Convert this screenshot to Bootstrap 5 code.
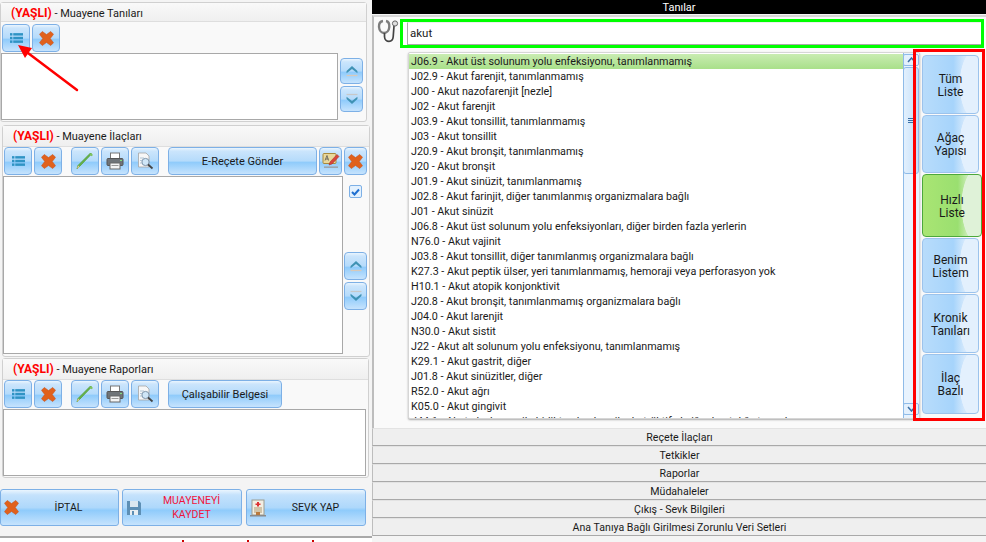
<!DOCTYPE html>
<html lang="tr">
<head>
<meta charset="utf-8">
<title>Muayene</title>
<link href="https://cdn.jsdelivr.net/npm/bootstrap@5.3.0/dist/css/bootstrap.min.css" rel="stylesheet">
<style>
html,body{height:542px;overflow:hidden}
body{background:#f4f4f4;font-family:Roboto,"Liberation Sans",Arial,sans-serif;font-size:11px;line-height:15px;color:#1a1a1a;width:986px;position:relative}
.left-col{width:372px;flex:none}
.right-col{width:614px;flex:none}
.pane{border:1px solid #d0d0d0;border-radius:3px;background:#f9f9f9;--bs-card-bg:#f9f9f9;--bs-card-border-color:#d0d0d0}
.pane-a{height:120px;margin:2px 5px 0 0}
.pane-b{height:232px;margin:3px 2px 0 2px}
.pane-c{height:120px;margin:1px 3px 0 2px}
.pane-head{height:21px;padding:3px 0 0 10px;background:linear-gradient(#f9f9f9,#efefef);border-bottom:1px solid #dedede;font-size:11px;white-space:nowrap}
.pane-a .pane-head{height:19px}
.tag{color:#f00;font-weight:700;font-size:12px}
.tb-row{height:29px;padding-left:1px}
.pane-a .tb-row{padding-top:2px;height:30px}
.tb{--bs-btn-padding-x:0;--bs-btn-padding-y:0;--bs-btn-font-size:11px;--bs-btn-line-height:14px;--bs-btn-border-radius:4px;--bs-btn-color:#1a1a1a;--bs-btn-hover-color:#1a1a1a;--bs-btn-bg:#cfe7fc;--bs-btn-border-color:#7db0e6;border:1px solid #7db0e6;height:28px;width:28px;display:flex;align-items:center;justify-content:center;background:linear-gradient(#eaf5fe 0,#cbe5fc 12%,#b5dbfb 50%,#8fcbfb 55%,#c6e3fd 100%);flex:none}
.g1{margin-left:9px}.g0{margin-left:2px}
.w-send,.w-cal{padding-top:2px}
.w-send{width:149px}.w-cal{width:114px}.w-s{width:23px}
.box{background:#fff;border:1px solid #a8a8a8}
.box-a{width:337px;height:67px;margin:1px 0 0 0}
.box-b{width:340px;height:178px}
.box-c{width:363px;height:67px}
.updn{width:23px;height:26px}
.pane-b .updn{height:28px}
.up-col{margin-left:1px;gap:2px;width:23px}
.pane-a .up-col{margin-left:2px;padding-top:6px}
.chk{width:13px;height:13px;margin:9px 0 52px;border:1px solid #7db0e6;border-radius:2px;background:#e3f1fe;display:flex;align-items:center;justify-content:center}
.foot{height:37px;margin-top:11px}
.foot .tb{height:37px;width:119px;justify-content:flex-start;padding-left:3px;border-radius:3px;background:linear-gradient(#eaf5fe 0,#c5e2fc 14%,#aed8fb 50%,#8fcbfb 58%,#c6e3fd 100%)}
.foot .tb span{flex:1;text-align:center;font-size:10.5px}
.foot .w2{width:120px;margin-left:3px}
.foot .w3{width:120px;margin-left:4px}
.redt{color:#f0143c}
.strip{height:6px;margin-top:10px;border-top:2px solid #a9a9a9;background:#fff;width:372px;padding-left:182px;gap:63px}
.tick{display:block;width:2px;height:2px;background:#c00;margin-top:2px}
.black{height:14px;background:#000;color:#fff;text-align:center;line-height:15px;font-size:11px}
.main{height:413px;margin-top:1px;border-top:2px solid #d8d8d8;border-left:2px solid #bdbdbd;background:#fafafa;margin-left:0}
.steth{width:26px;height:31px;flex:none;padding:2px 0 0 3px}
.gbox{width:584px;height:29px;border:3px solid #0f0;margin-top:2px;background:#fff;padding-left:4px}
.gbox input{width:100%;height:23px;border:0;border-left:1px solid #aaa;border-bottom:1px solid #aaa;border-top:1px solid #eee;outline:0;padding:0 0 1px 2px;font:inherit;font-size:11.5px;color:#1a1a1a;display:block;box-shadow:none;border-radius:0}
.list-wrap{width:512px;height:367px;margin:4px 0 0 34px;background:#fff;border:1px solid #d6d6d6;border-radius:2px;box-shadow:0 1px 2px #aaa;overflow:hidden;flex:none}
.dx-list{width:495px;overflow:hidden;--bs-list-group-bg:transparent;--bs-list-group-border-width:0;border-radius:0;margin-top:1px}
.dx-list .list-group-item{padding:0 0 0 2px;height:15px;line-height:15px;white-space:nowrap;color:#1a1a1a;font-size:10.75px}
.dx-list .sel{background:linear-gradient(#c9ecb2,#a9e08a)}
.sbar{width:16px;flex:none;background:#e8f3fe;border-left:1px solid #8fbbe8;position:relative}
.sb-btn{height:12px;border:1px solid #8fbbe8;border-radius:2px;background:#e3f0fd;margin:1px 0 0 -1px;display:flex;align-items:center;justify-content:center}
.sb-thumb{height:107px;border:1px solid #8fbbe8;border-radius:3px;background:linear-gradient(90deg,#e3f0fd,#c3dffa);margin:1px 0 0 -1px;display:flex;align-items:center;justify-content:center}
.sb-track{height:228px}
.grip{width:7px;height:5px;border-top:1px solid #3a6ea5;border-bottom:1px solid #3a6ea5;position:relative}
.grip i{position:absolute;left:0;right:0;top:1px;border-top:1px solid #3a6ea5}
.tabs{width:60px;margin-left:2px;padding-top:7px;flex:none}
.stab{--bs-btn-padding-x:0;--bs-btn-padding-y:0;--bs-btn-font-size:12px;--bs-btn-line-height:13px;--bs-btn-color:#1a1a1a;--bs-btn-hover-color:#1a1a1a;--bs-btn-border-radius:4px;width:57px;border:1px solid #9cc3ec;padding-top:2px;display:flex;align-items:center;justify-content:center;text-align:center;background:radial-gradient(ellipse 30px 60px at 100% 50%,#e3f0fd 60%,transparent 62%),linear-gradient(90deg,#b8dcfb,#a6d4fb 55%,#d3e8fc 75%);flex:none;margin-bottom:1px}
.stab.on{width:60px;border-color:#4ca83c;background:radial-gradient(ellipse 32px 66px at 100% 50%,#dff2d8 60%,transparent 62%),linear-gradient(90deg,#a9e573,#9adf70 60%,#c5ebb0 75%)}
.acc{--bs-list-group-bg:#efefef;--bs-list-group-border-width:0;border-radius:0;margin-top:0}
.acc .list-group-item{height:18px;padding:1px 0 0;text-align:center;line-height:15px;color:#1a1a1a;border-top:1px solid #e3e3e3;border-left:1px solid #bdbdbd;border-bottom:1px solid #a9a9a9;background:#efefef;font-size:10.6px}
.red-frame{position:absolute;left:913px;top:49px;width:72px;height:372px;border:3px solid #f00;pointer-events:none}
.red-arrow{position:absolute;left:0;top:0;pointer-events:none}
</style>
</head>
<body>
<svg width="0" height="0" class="position-absolute">
<defs>
<symbol id="i-list" viewBox="0 0 16 14"><g fill="#2f93c4"><rect x="0" y="1" width="3" height="3"/><rect x="4" y="1" width="12" height="3"/><rect x="0" y="5.500" width="3" height="3"/><rect x="4" y="5.500" width="12" height="3"/><rect x="0" y="10" width="3" height="3"/><rect x="4" y="10" width="12" height="3"/></g></symbol>
<symbol id="i-x" viewBox="0 0 16 16"><path d="M3.500 .5 8 3.800 12.500 .5 15.500 3.500 12 8 15.500 12.500 12.500 15.500 8 12.200 3.500 15.500 .5 12.500 4 8 .5 3.500Z" fill="#e0611c" stroke="#c9521a" stroke-width=".6" stroke-linejoin="round"/></symbol>
<symbol id="i-pen" viewBox="0 0 18 18"><path d="M1 17 2 13.500 14.500 1 15.500 2Z" fill="#69b64a" stroke="#4c9a33" stroke-width=".8"/><path d="M1 17 2 13.500 3.500 14.800Z" fill="#e8c79a"/><path d="M15 1 17 3 15.500 4.300 13.500 2.500Z" fill="#7fc35f"/></symbol>
<symbol id="i-print" viewBox="0 0 18 18"><rect x="4.500" y="1" width="9" height="6" fill="#fff" stroke="#777"/><rect x="1" y="6.500" width="16" height="7" rx="1" fill="#6f7478" stroke="#555"/><rect x="4" y="11" width="10" height="6" fill="#f4f4f4" stroke="#666"/><rect x="5.500" y="13" width="7" height="1" fill="#999"/><rect x="14" y="8" width="2" height="1" fill="#7ee07e"/></symbol>
<symbol id="i-find" viewBox="0 0 18 18"><path d="M2.500 1H10L13 4V15H2.500Z" fill="#f7f7f7" stroke="#a5a5a5" stroke-width=".8"/><circle cx="9.500" cy="10" r="3.600" fill="#cfe6f7" stroke="#7d93a8"/><path d="M12 12.500 16.500 16.500" stroke="#444" stroke-width="1.800"/><path d="M4 6h4M4 8.500h2.500M4 11h2.500" stroke="#9fb8cc" stroke-width=".8"/></symbol>
<symbol id="i-ab" viewBox="0 0 18 18"><rect x="1" y="1.500" width="13" height="10" rx="1" fill="#e9d89b" stroke="#a98a3c"/><rect x="2" y="14.500" width="14" height="1.300" fill="#9a9a9a"/><path d="M7 13 8 10 15 2.500 17 4.500 10 12Z" fill="#d8453c" stroke="#a42a24" stroke-width=".5"/><path d="M3 8.500 5 3.500 6.500 8.500M3.800 7h2.600" stroke="#555" stroke-width=".8" fill="none"/></symbol>
<symbol id="i-up" viewBox="0 0 18 20"><path d="M2 10 9 3.500 16 10V13L9 7.500 2 13Z" fill="#3f92b4"/><rect x="2" y="15" width="14" height="1.600" fill="#d9c9b8"/></symbol>
<symbol id="i-dn" viewBox="0 0 18 20"><rect x="2" y="3.400" width="14" height="1.600" fill="#c8c8c8"/><path d="M2 10 9 16.500 16 10V7L9 12.500 2 7Z" fill="#3f92b4"/></symbol>
</defs>
</svg>

<div class="d-flex">
<div class="left-col">
  <div class="card pane pane-a">
    <div class="pane-head"><span class="tag">(YAŞLI)</span> - Muayene Tanıları</div>
    <div class="tb-row d-flex">
      <button class="btn tb"><svg width="13" height="12"><use href="#i-list"/></svg></button>
      <button class="btn tb g0"><svg width="15" height="15"><use href="#i-x"/></svg></button>
    </div>
    <div class="d-flex">
      <div class="box box-a"></div>
      <div class="d-flex flex-column up-col">
        <button class="btn tb updn"><svg width="14" height="16"><use href="#i-up"/></svg></button>
        <button class="btn tb updn"><svg width="14" height="16"><use href="#i-dn"/></svg></button>
      </div>
    </div>
  </div>

  <div class="card pane pane-b">
    <div class="pane-head"><span class="tag">(YAŞLI)</span> - Muayene İlaçları</div>
    <div class="tb-row d-flex">
      <button class="btn tb"><svg width="13" height="12"><use href="#i-list"/></svg></button>
      <button class="btn tb g0"><svg width="15" height="15"><use href="#i-x"/></svg></button>
      <button class="btn tb g1"><svg width="18" height="18"><use href="#i-pen"/></svg></button>
      <button class="btn tb g0"><svg width="18" height="18"><use href="#i-print"/></svg></button>
      <button class="btn tb g0"><svg width="18" height="18"><use href="#i-find"/></svg></button>
      <button class="btn tb g1 w-send">E-Reçete Gönder</button>
      <button class="btn tb g0 w-s"><svg width="18" height="18"><use href="#i-ab"/></svg></button>
      <button class="btn tb g0 w-s"><svg width="15" height="15"><use href="#i-x"/></svg></button>
    </div>
    <div class="d-flex">
      <div class="box box-b"></div>
      <div class="d-flex flex-column up-col align-items-center">
        <div class="chk"><svg width="9" height="8" viewBox="0 0 9 8"><path d="M1 4 3.500 6.500 8 1.500" stroke="#1f6fd0" stroke-width="2" fill="none"/></svg></div>
        <button class="btn tb updn"><svg width="14" height="16"><use href="#i-up"/></svg></button>
        <button class="btn tb updn"><svg width="14" height="16"><use href="#i-dn"/></svg></button>
      </div>
    </div>
  </div>

  <div class="card pane pane-c">
    <div class="pane-head"><span class="tag">(YAŞLI)</span> - Muayene Raporları</div>
    <div class="tb-row d-flex">
      <button class="btn tb"><svg width="13" height="12"><use href="#i-list"/></svg></button>
      <button class="btn tb g0"><svg width="15" height="15"><use href="#i-x"/></svg></button>
      <button class="btn tb g1"><svg width="18" height="18"><use href="#i-pen"/></svg></button>
      <button class="btn tb g0"><svg width="18" height="18"><use href="#i-print"/></svg></button>
      <button class="btn tb g0"><svg width="18" height="18"><use href="#i-find"/></svg></button>
      <button class="btn tb g1 w-cal">Çalışabilir Belgesi</button>
    </div>
    <div class="box box-c"></div>
  </div>

  <div class="foot d-flex">
    <button class="btn tb"><svg width="15" height="15"><use href="#i-x"/></svg><span>İPTAL</span></button>
    <button class="btn tb w2"><svg width="16" height="16" viewBox="0 0 16 16"><path d="M1 1H13L15 3V15H1Z" fill="#5d8fb5"/><rect x="4" y="1" width="8" height="6" fill="#dbe7f0"/><rect x="4" y="10" width="8" height="5" fill="#e8eef3"/><rect x="6" y="11" width="2" height="4" fill="#5d8fb5"/></svg><span class="redt">MUAYENEYİ<br>KAYDET</span></button>
    <button class="btn tb w3"><svg width="16" height="18" viewBox="0 0 16 18"><rect x="2" y="1" width="12" height="15" fill="#f2eee2" stroke="#9c9c90"/><path d="M7 3h2v1.500h1.500v1.500H9v1.500H7V6H5.500V4.500H7Z" fill="#d33"/><path d="M4 9h8M4 11h8M4 13h8" stroke="#b09a70"/><rect x="6" y="13" width="4" height="3" fill="#b9793c"/><rect x="0" y="16" width="16" height="1.500" fill="#8a8a8a"/></svg><span>SEVK YAP</span></button>
  </div>
  <div class="strip d-flex"><i class="tick"></i><i class="tick"></i><i class="tick"></i></div>
</div>

<div class="right-col">
  <div class="black">Tanılar</div>
  <div class="main">
    <div class="d-flex">
      <div class="steth"><svg width="22" height="24" viewBox="0 0 22 24"><path d="M6 2C3 2.500 1.800 5 2 8c.3 3.500 2.500 6 5 6 2.800 0 5-2.500 5.300-6 .2-3-.8-5.500-3.300-6" fill="none" stroke="#7d7d7d" stroke-width="2.400"/><path d="M7.500 14v3.500c0 3 2.300 4.800 4.500 4.800 2.500 0 4-2 4.200-4.500L17 7" fill="none" stroke="#444" stroke-width="1.700"/><circle cx="18" cy="4.500" r="2.600" fill="#dedede" stroke="#666"/></svg></div>
      <div class="gbox"><input class="form-control" type="text" value="akut"></div>
    </div>
    <div class="d-flex">
      <div class="list-wrap d-flex">
        <ul class="list-group dx-list">
          <li class="list-group-item sel">J06.9 - Akut üst solunum yolu enfeksiyonu, tanımlanmamış</li>
          <li class="list-group-item">J02.9 - Akut farenjit, tanımlanmamış</li>
          <li class="list-group-item">J00 - Akut nazofarenjit [nezle]</li>
          <li class="list-group-item">J02 - Akut farenjit</li>
          <li class="list-group-item">J03.9 - Akut tonsillit, tanımlanmamış</li>
          <li class="list-group-item">J03 - Akut tonsillit</li>
          <li class="list-group-item">J20.9 - Akut bronşit, tanımlanmamış</li>
          <li class="list-group-item">J20 - Akut bronşit</li>
          <li class="list-group-item">J01.9 - Akut sinüzit, tanımlanmamış</li>
          <li class="list-group-item">J02.8 - Akut farinjit, diğer tanımlanmış organizmalara bağlı</li>
          <li class="list-group-item">J01 - Akut sinüzit</li>
          <li class="list-group-item">J06.8 - Akut üst solunum yolu enfeksiyonları, diğer birden fazla yerlerin</li>
          <li class="list-group-item">N76.0 - Akut vajinit</li>
          <li class="list-group-item">J03.8 - Akut tonsillit, diğer tanımlanmış organizmalara bağlı</li>
          <li class="list-group-item">K27.3 - Akut peptik ülser, yeri tanımlanmamış, hemoraji veya perforasyon yok</li>
          <li class="list-group-item">H10.1 - Akut atopik konjonktivit</li>
          <li class="list-group-item">J20.8 - Akut bronşit, tanımlanmamış organizmalara bağlı</li>
          <li class="list-group-item">J04.0 - Akut larenjit</li>
          <li class="list-group-item">N30.0 - Akut sistit</li>
          <li class="list-group-item">J22 - Akut alt solunum yolu enfeksiyonu, tanımlanmamış</li>
          <li class="list-group-item">K29.1 - Akut gastrit, diğer</li>
          <li class="list-group-item">J01.8 - Akut sinüzitler, diğer</li>
          <li class="list-group-item">R52.0 - Akut ağrı</li>
          <li class="list-group-item">K05.0 - Akut gingivit</li>
          <li class="list-group-item">J44.1 - Akut alevlenme ile birlikte olan kronik obstrüktif akciğer hastalığı, tanımlanmamış</li>
        </ul>
        <div class="sbar">
          <div class="sb-btn"><svg width="9" height="6" viewBox="0 0 9 6"><path d="M1 5 4.500 1 8 5" stroke="#3a6ea5" stroke-width="1.500" fill="none"/></svg></div>
          <div class="sb-thumb"><span class="grip"><i></i></span></div>
          <div class="sb-track"></div>
          <div class="sb-btn"><svg width="9" height="6" viewBox="0 0 9 6"><path d="M1 1 4.500 5 8 1" stroke="#3a6ea5" stroke-width="1.500" fill="none"/></svg></div>
        </div>
      </div>
      <div class="tabs d-flex flex-column">
        <button class="btn stab" style="height:59px">Tüm<br>Liste</button>
        <button class="btn stab" style="height:58px">Ağaç<br>Yapısı</button>
        <button class="btn stab on" style="height:63px">Hızlı<br>Liste</button>
        <button class="btn stab" style="height:55px">Benim<br>Listem</button>
        <button class="btn stab" style="height:59px">Kronik<br>Tanıları</button>
        <button class="btn stab" style="height:60px">İlaç<br>Bazlı</button>
      </div>
    </div>
  </div>
  <ul class="list-group acc">
    <li class="list-group-item">Reçete İlaçları</li>
    <li class="list-group-item">Tetkikler</li>
    <li class="list-group-item">Raporlar</li>
    <li class="list-group-item">Müdahaleler</li>
    <li class="list-group-item">Çıkış - Sevk Bilgileri</li>
    <li class="list-group-item">Ana Tanıya Bağlı Girilmesi Zorunlu Veri Setleri</li>
  </ul>
</div>
</div>

<div class="red-frame"></div>
<svg class="red-arrow" width="90" height="100"><path d="M77 90 24 50" stroke="#f00" stroke-width="2.500" stroke-linecap="round"/><path d="M18 45 32 48 25 58Z" fill="#f00"/></svg>
</body>
</html>
